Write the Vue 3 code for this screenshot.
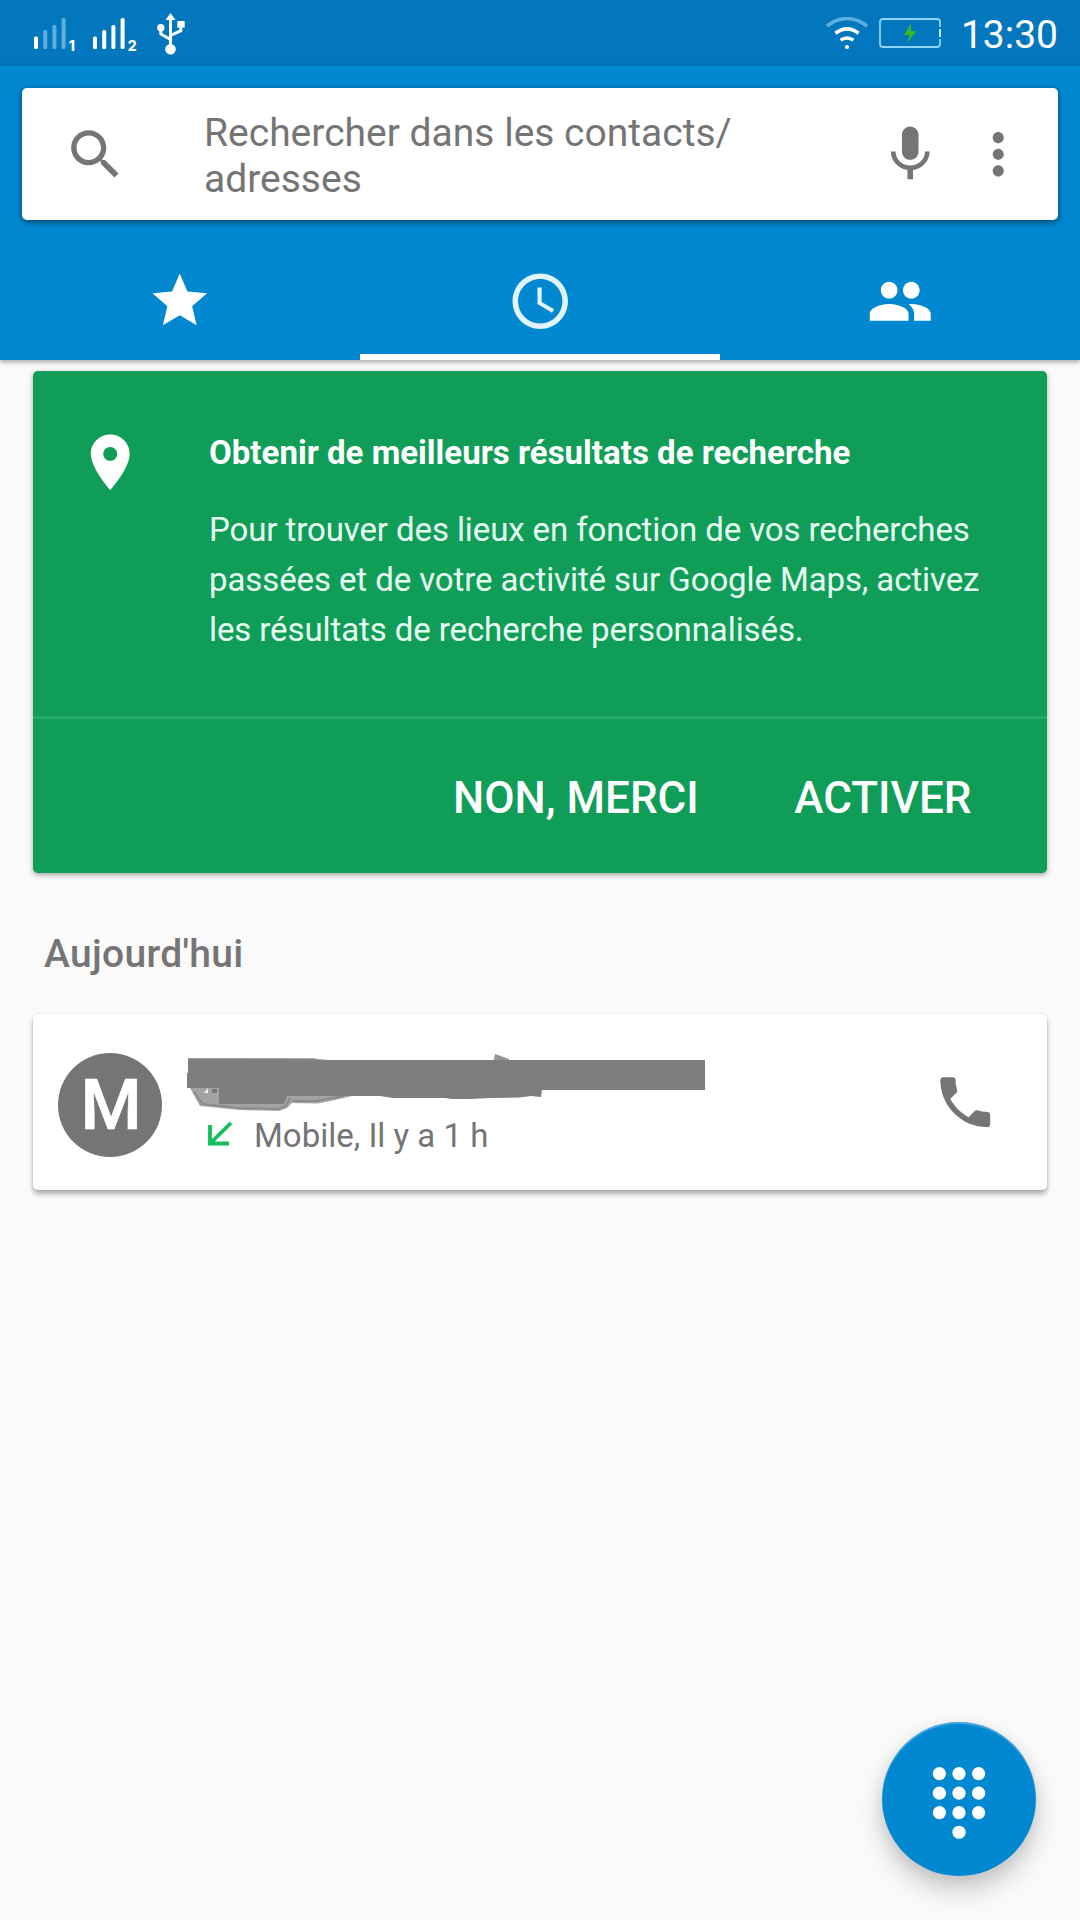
<script setup>
const simOne = [
  { x: 0, h: 12.5, on: true },
  { x: 9.2, h: 19, on: false },
  { x: 18.4, h: 24, on: false },
  { x: 27.6, h: 31, on: false },
]
const simTwo = simOne.map((bar) => ({ ...bar, on: true }))
const keys = [
  [0, 0], [1, 0], [2, 0],
  [0, 1], [1, 1], [2, 1],
  [0, 2], [1, 2], [2, 2],
  [1, 3],
]
</script>

<template>
  <div class="screen">
    <div class="status">
      <div class="status-left">
        <svg v-for="(sim, n) in [simOne, simTwo]" :key="n" class="signal" width="44" height="36" viewBox="0 0 44 36">
          <rect
            v-for="bar in sim" :key="bar.x" :x="bar.x" :y="31 - bar.h" width="4" :height="bar.h" rx="1.5"
            :fill="bar.on ? '#fff' : '#5eafe0'"
          />
          <text x="34.8" y="33.2">{{ n + 1 }}</text>
        </svg>
        <svg class="usb" width="28" height="42" viewBox="0 0 28 42">
          <g fill="none" stroke="#fff" stroke-width="3">
            <path d="M13.5 34V5M13.5 26.5L3.8 21V14M13.5 22.5l10.3-4.8V12" />
          </g>
          <g fill="#fff">
            <path d="M13.5 0l5 7h-10z" />
            <circle cx="13.5" cy="36.2" r="5.3" />
            <circle cx="3.8" cy="14.8" r="3.7" />
            <path d="M20.3 8h7.4v6.6h-7.4z" />
          </g>
        </svg>
      </div>
      <div class="status-right">
        <svg class="wifi" width="42" height="34" viewBox="0 0 42 34" fill="none" stroke-linecap="butt">
          <path d="M1 9Q21-6 41 9" stroke="#5eafe0" stroke-width="3.6" />
          <path d="M9.4 16.2Q21 7.6 32.6 16.2" stroke="#fff" stroke-width="3.6" />
          <path d="M14.6 23.2Q21 18.6 27.4 23.2" stroke="#fff" stroke-width="3.4" />
          <circle cx="21" cy="30" r="2.1" fill="#fff" />
        </svg>
        <svg class="battery" width="63" height="30" viewBox="0 0 63 30" fill="none">
          <path d="M61 9V4Q61 1 58 1H4Q1 1 1 4v22q0 3 3 3h54q3 0 3-3v-5" stroke="#8fd3f5" stroke-width="1.8" />
          <path d="M61 11v8" stroke="#c9ecfc" stroke-width="2" />
          <path d="M32.2 5L25 17h5.4l-2 8.2L37.4 13h-5.6z" fill="#3bb526" />
        </svg>
        <span class="clock">13:30</span>
      </div>
    </div>

    <header class="header">
      <div class="search">
        <svg class="glass" width="65" height="65" viewBox="0 0 24 24">
          <path d="M15.5 14h-.79l-.28-.27C15.41 12.59 16 11.11 16 9.5 16 5.91 13.09 3 9.5 3S3 5.91 3 9.5 5.91 16 9.5 16c1.61 0 3.09-.59 4.23-1.57l.27.28v.79l5 4.99L20.49 19l-4.99-5zm-6 0C7.01 14 5 11.99 5 9.5S7.01 5 9.5 5 14 7.01 14 9.5 11.99 14 9.5 14z" />
        </svg>
        <p class="hint">Rechercher dans les contacts/<br>adresses</p>
        <svg class="mic" width="66.5" height="66.5" viewBox="0 0 24 24">
          <path d="M12 14c1.66 0 2.99-1.34 2.99-3L15 5c0-1.66-1.34-3-3-3S9 3.34 9 5v6c0 1.66 1.34 3 3 3zm5.3-3c0 3-2.54 5.1-5.3 5.1S6.7 14 6.7 11H5c0 3.41 2.72 6.23 6 6.72V21h2v-3.28c3.28-.48 6-3.3 6-6.72h-1.7z" />
        </svg>
        <svg class="more" width="66.5" height="66.5" viewBox="0 0 24 24">
          <path d="M12 8c1.1 0 2-.9 2-2s-.9-2-2-2-2 .9-2 2 .9 2 2 2zm0 2c-1.1 0-2 .9-2 2s.9 2 2 2 2-.9 2-2-.9-2-2-2zm0 6c-1.1 0-2 .9-2 2s.9 2 2 2 2-.9 2-2-.9-2-2-2z" />
        </svg>
      </div>
      <nav class="tabs">
        <div class="tab">
          <svg width="65.5" height="65.5" viewBox="0 0 24 24">
            <path d="M12 17.27L18.18 21l-1.64-7.03L22 9.24l-7.19-.61L12 2 9.19 8.63 2 9.24l5.46 4.73L5.82 21z" />
          </svg>
        </div>
        <div class="tab active">
          <svg width="66.5" height="66.5" viewBox="0 0 24 24">
            <path d="M11.99 2C6.47 2 2 6.48 2 12s4.47 10 9.99 10C17.52 22 22 17.52 22 12S17.52 2 11.99 2zM12 20c-4.42 0-8-3.58-8-8s3.58-8 8-8 8 3.58 8 8-3.58 8-8 8zM12.5 7H11v6l5.25 3.15.75-1.23-4.5-2.67z" />
          </svg>
        </div>
        <div class="tab">
          <svg width="66.5" height="66.5" viewBox="0 0 24 24">
            <path d="M16 11c1.66 0 2.99-1.34 2.99-3S17.66 5 16 5c-1.66 0-3 1.34-3 3s1.34 3 3 3zm-8 0c1.66 0 2.99-1.34 2.99-3S9.66 5 8 5C6.34 5 5 6.34 5 8s1.34 3 3 3zm0 2c-2.33 0-7 1.17-7 3.5V19h14v-2.5c0-2.33-4.67-3.5-7-3.5zm8 0c-.29 0-.62.02-.97.05 1.16.84 1.97 1.97 1.97 3.45V19h6v-2.5c0-2.33-4.67-3.5-7-3.5z" />
          </svg>
        </div>
      </nav>
    </header>

    <main class="content">
      <section class="promo">
        <div class="promo-main">
          <svg class="pin" width="66.5" height="66.5" viewBox="0 0 24 24">
            <path d="M12 2C8.13 2 5 5.13 5 9c0 5.25 7 13 7 13s7-7.75 7-13c0-3.87-3.13-7-7-7zm0 9.5c-1.38 0-2.5-1.12-2.5-2.5s1.12-2.5 2.5-2.5 2.5 1.12 2.5 2.5-1.12 2.5-2.5 2.5z" />
          </svg>
          <div>
            <h2>Obtenir de meilleurs résultats de recherche</h2>
            <p class="promo-text">
              <span>Pour trouver des lieux en fonction de vos recherches</span><br>
              <span>passées et de votre activité sur Google Maps, activez</span><br>
              <span>les résultats de recherche personnalisés.</span>
            </p>
          </div>
        </div>
        <div class="promo-actions">
          <span>NON, MERCI</span>
          <span>ACTIVER</span>
        </div>
      </section>

      <h3>Aujourd'hui</h3>

      <section class="call">
        <div class="avatar"><span>M</span></div>
        <div class="call-info">
          <svg class="masked" width="522" height="60" viewBox="186 1053 522 60">
            <path d="M190 1088L200 1106 240 1110 279 1111 287 1108 292 1103 318 1103.5 335 1100 352 1096 352 1086z" fill="#a3a3a3" />
            <path d="M194 1092L203 1104 240 1108 278 1109 286 1106 290 1098M293 1101L316 1101 344 1096" fill="none" stroke="#8b8b8b" stroke-width="2" />
            <path d="M204 1093l4-5v5z" fill="#f5f5f5" />
            <path d="M493.5 1061l1.5-7 14 5v2z" fill="#969696" />
            <path d="M188 1058.3L311 1058.8 330 1060H705V1090H542L541 1097 531 1096 520 1097.5 490 1098 470 1099 452 1099 445 1098 393 1098 380 1096H287L284 1104H219V1088H187V1073H188z" fill="#7e7e7e" />
            <path d="M212 1089h5v4h-5z" fill="#777" />
            <path d="M190 1058.8H316" stroke="#969696" stroke-width="1" />
            <path d="M320 1060.5H500M543 1068q25-2 50 0t60-2M543 1080q40-3 90 0" fill="none" stroke="#838383" stroke-width="1" />
          </svg>
          <div class="call-meta">
            <svg class="arrow" width="25" height="24" viewBox="0 0 25 24">
              <path d="M2 3v18.5h19M2 21.5L23 1" fill="none" stroke="#12bd5b" stroke-width="3.8" />
            </svg>
            <span class="meta">Mobile, Il y a 1 h</span>
          </div>
        </div>
        <svg class="phone" width="66.5" height="66.5" viewBox="0 0 24 24">
          <path d="M20 15.5c-1.25 0-2.45-.2-3.57-.57-.35-.11-.74-.03-1.02.24l-2.2 2.2c-2.83-1.44-5.15-3.75-6.59-6.59l2.2-2.21c.28-.26.36-.65.25-1C8.7 6.45 8.5 5.25 8.5 4c0-.55-.45-1-1-1H4c-.55 0-1 .45-1 1 0 9.39 7.61 17 17 17 .55 0 1-.45 1-1v-3.5c0-.55-.45-1-1-1z" />
        </svg>
      </section>
    </main>

    <div class="fab">
      <svg width="60" height="74" viewBox="0 0 60 74">
        <circle v-for="([c, r]) in keys" :key="c + '-' + r" :cx="10.4 + c * 19.6" :cy="7.6 + r * 19.55" r="6.6" fill="#fff" />
      </svg>
    </div>
  </div>
</template>

<style>
body { background: #fafafa; }
</style>

<style scoped>
.screen {
  position: relative;
  width: 1080px;
  height: 1920px;
  overflow: hidden;
  background: #fafafa;
  font-family: Roboto, "Liberation Sans", sans-serif;
  color: #757575;
}
svg { display: block; flex: none; }
span { white-space: nowrap; }
h2, h3, p { margin: 0; }

.status {
  display: flex;
  justify-content: space-between;
  height: 66px;
  background: #0277bd;
  color: #fff;
}
.status-left { display: flex; padding-left: 33.5px; }
.signal { margin: 18px 15px 0 0; overflow: visible; }
.signal text { font: 800 14px Inter, sans-serif; fill: #fff; }
.usb { margin: 13px 0 0 5.5px; }
.status-right { display: flex; padding-right: 22px; }
.wifi { margin: 17px 11px 0 0; }
.battery { margin: 18px 19px 0 0; }
.clock { font-size: 39px; line-height: 70px; }

.header {
  position: relative;
  height: 294px;
  box-sizing: border-box;
  padding: 22px 22px 0;
  background: #0288d1;
  box-shadow: 0 2px 5px rgba(0, 0, 0, .35);
}
.search {
  display: flex;
  height: 132px;
  border-radius: 5px;
  background: #fff;
  box-shadow: 0 2px 6px rgba(0, 0, 0, .5);
  fill: #757575;
}
.glass { margin: 34px 0 0 41px; }
.hint {
  flex: 1;
  margin: 22px 0 0 76px;
  font-size: 39px;
  line-height: 46px;
}
.mic { margin: 32.5px 0 0; }
.more { margin: 33px 27px 0 21.5px; }
.tabs { display: flex; height: 140px; margin: 0 -22px; fill: #fff; }
.tab {
  flex: 1;
  display: flex;
  justify-content: center;
  box-sizing: border-box;
  padding-top: 48px;
}
.active { fill: #e1f5fe; border-bottom: 6px solid #fff; }

.content { padding: 11px 33px 0; }
.promo {
  height: 502px;
  border-radius: 5px;
  background: #0f9d58;
  color: #fff;
  fill: #fff;
  box-shadow: 0 2px 5px rgba(0, 0, 0, .35);
}
.promo-main { display: flex; height: 345px; border-bottom: 3px solid #27ac6a; }
.pin { margin: 57.5px 66px 0 43.5px; }
h2 { margin-top: 62px; font-size: 33px; font-weight: 700; line-height: 40px; letter-spacing: .02px; }
.promo-text { margin-top: 32px; font-size: 33px; line-height: 50px; letter-spacing: -.1px; color: #e8fff3; }
.promo-actions {
  display: flex;
  justify-content: flex-end;
  gap: 95.5px;
  padding: 54px 75.5px 0 0;
  font-size: 44px;
  font-weight: 500;
  line-height: 50px;
}
h3 { margin: 56px 0 0 11px; font-size: 39px; font-weight: 500; line-height: 50px; letter-spacing: .3px; }
.call {
  display: flex;
  height: 176px;
  margin-top: 35px;
  border-radius: 5px;
  background: #fff;
  box-shadow: 0 4px 5px rgba(0, 0, 0, .3), 0 0 2px rgba(0, 0, 0, .15);
}
.avatar {
  display: flex;
  justify-content: center;
  width: 104px;
  height: 104px;
  margin: 39px 0 0 25px;
  border-radius: 50%;
  background: #757575;
  color: #fff;
  font-size: 70px;
  font-weight: 500;
  line-height: 105px;
  -webkit-text-stroke: .7px #fff;
}
.avatar span { padding-left: 2px; }
.call-info { flex: 1; padding: 39px 0 0 24px; }
.call-meta { display: flex; align-items: flex-start; margin-left: 22px; font-size: 33px; line-height: 40px; }
.arrow { margin: 9px 21px 0 0; }
.meta { margin-top: 3px; }
.phone { margin: 55px 49px 0 0; fill: #757575; }
.fab {
  position: absolute;
  left: 882px;
  top: 1722px;
  display: flex;
  justify-content: center;
  width: 154px;
  height: 154px;
  box-sizing: border-box;
  padding-top: 43.5px;
  border-radius: 50%;
  background: #0288d1;
  box-shadow: 0 14px 26px rgba(0, 0, 0, .2), 0 3px 14px rgba(0, 0, 0, .07), inset 0 2px 1px rgba(255, 255, 255, .25);
}
</style>
